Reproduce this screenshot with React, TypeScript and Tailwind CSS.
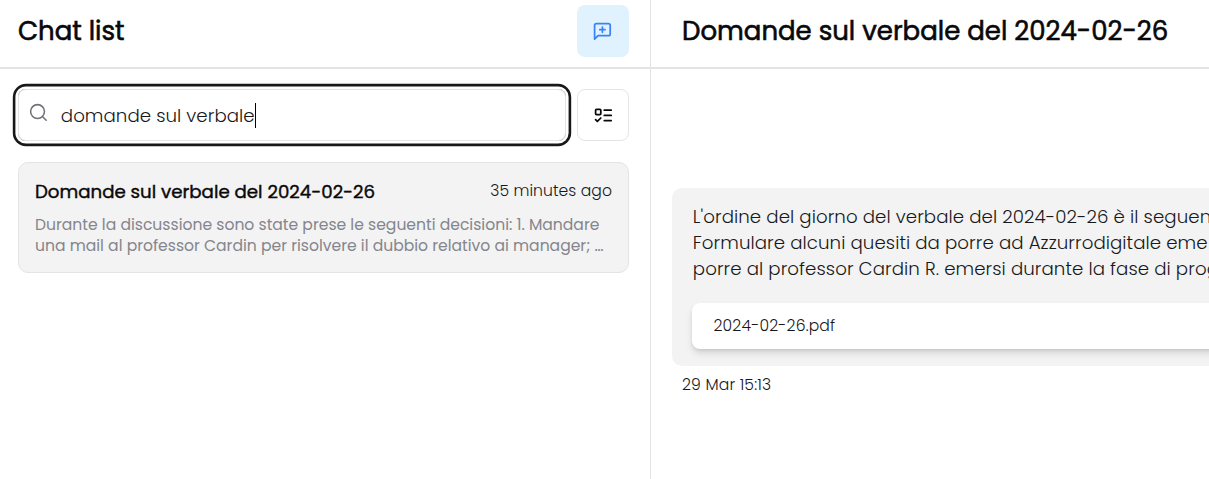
import { Search } from "lucide-react";

const messageLines = [
  "L'ordine del giorno del verbale del 2024-02-26 è il seguen",
  "Formulare alcuni quesiti da porre ad Azzurrodigitale eme",
  "porre al professor Cardin R. emersi durante la fase di prog",
];

function Icon({ paths }: { paths: string[] }) {
  return (
    <svg width="20.8" height="20.8" viewBox="0 0 24 24" fill="none" stroke="currentColor" strokeWidth="2" strokeLinecap="round" strokeLinejoin="round">
      {paths.map((d) => (
        <path key={d} d={d} />
      ))}
    </svg>
  );
}

const newChatPaths = ["M21 15a2 2 0 0 1-2 2H7l-4 4V5a2 2 0 0 1 2-2h14a2 2 0 0 1 2 2z", "M12 7v6", "M9 10h6"];
const checklistPaths = ["M4 5h4a1 1 0 0 1 1 1v4a1 1 0 0 1-1 1H4a1 1 0 0 1-1-1V6a1 1 0 0 1 1-1z", "m3 17 2 2 4-4", "M13 6h8", "M13 12h8", "M13 18h8"];

function ChatCard() {
  return (
    <article className="mt-[21px] h-[111px] rounded-[10px] border border-[#e4e4e7] bg-[#f3f3f3] px-4 pt-[14px]">
      <div className="flex h-7 items-center justify-between whitespace-nowrap">
        <h2 className="pt-px text-[18.2px] font-normal text-[#09090b] [-webkit-text-stroke:0.4px_#09090b]">Domande sul verbale del 2024-02-26</h2>
        <span className="text-[15.6px] font-light tracking-[0.07px]">35 minutes ago</span>
      </div>
      <p className="mt-[9px] whitespace-nowrap text-[15.6px] font-normal leading-[21px] text-[#85858d]">
        <span className="block">Durante la discussione sono state prese le seguenti decisioni: 1. Mandare</span>
        <span className="block">una mail al professor Cardin per risolvere il dubbio relativo ai manager; …</span>
      </p>
    </article>
  );
}

function Sidebar() {
  return (
    <aside className="flex w-[651px] shrink-0 flex-col border-r border-[#e4e4e7]">
      <header className="flex h-[69px] items-start justify-between border-b-2 border-[#e4e4e7] pl-[18px] pr-[21px] pt-[5px]">
        <h1 className="text-[26px] font-normal leading-[52px] text-[#09090b] [-webkit-text-stroke:0.6px_#09090b]">Chat list</h1>
        <button aria-label="New chat" className="flex size-[52px] items-center justify-center rounded-[8px] bg-[#e0f2fe] pr-px text-[#3b82f6]">
          <Icon paths={newChatPaths} />
        </button>
      </header>
      <div className="pl-[18px] pr-[21px] pt-5">
        <div className="flex gap-[11px]">
          <div className="flex h-[52px] w-[548px] items-center rounded-[8px] border border-[#e4e4e7] pl-[9px] text-[18.2px] font-light shadow-[0_0_0_2.6px_#fff,0_0_0_5.2px_#18181b]">
            <Search size={20.8} strokeWidth={1.8} className="mb-1.5 text-[#71717a]" />
            <span className="ml-3 whitespace-nowrap pt-0.5 tracking-[0.06px]">domande sul verbale</span>
            <span className="h-[25px] w-px bg-black" />
          </div>
          <button aria-label="Select chats" className="flex size-[52px] items-center justify-center rounded-[8px] border border-[#e4e4e7] text-[#09090b]">
            <Icon paths={checklistPaths} />
          </button>
        </div>
        <ChatCard />
      </div>
    </aside>
  );
}

function Conversation() {
  return (
    <main className="w-[558px] overflow-hidden">
      <header className="h-[69px] border-b-2 border-[#e4e4e7] pl-[31px] pt-[5px]">
        <h1 className="whitespace-nowrap text-[26px] font-normal leading-[52px] text-[#09090b] [-webkit-text-stroke:0.6px_#09090b]">
          Domande sul verbale del 2024-02-26
        </h1>
      </header>
      <section className="pl-[21px] pt-[119px]">
        <div className="h-[178px] w-[600px] rounded-[10px] bg-[#f3f3f3] pl-5 pt-4">
          <div className="whitespace-nowrap pl-[0.8px] text-[18.2px] font-light leading-[26px] tracking-[0.075px]">
            {messageLines.map((line) => (
              <p key={line}>{line}</p>
            ))}
          </div>
          <div className="mt-[21px] flex h-[46px] items-center rounded-[8px] bg-white pl-[21.5px] text-[15.6px] font-light tracking-[0.17px] shadow-[0_5px_8px_-1px_rgb(0_0_0/0.12),0_2px_4px_-1px_rgb(0_0_0/0.12)]">
            2024-02-26.pdf
          </div>
        </div>
        <time className="mt-[8px] block pl-[10px] text-[15.6px] font-light leading-[21px] tracking-[0.16px]">29 Mar 15:13</time>
      </section>
    </main>
  );
}

export default function App() {
  return (
    <div className="flex h-[479px] w-[1209px] overflow-hidden bg-white font-[Poppins,Inter,sans-serif] text-[#18181b]">
      <Sidebar />
      <Conversation />
    </div>
  );
}
